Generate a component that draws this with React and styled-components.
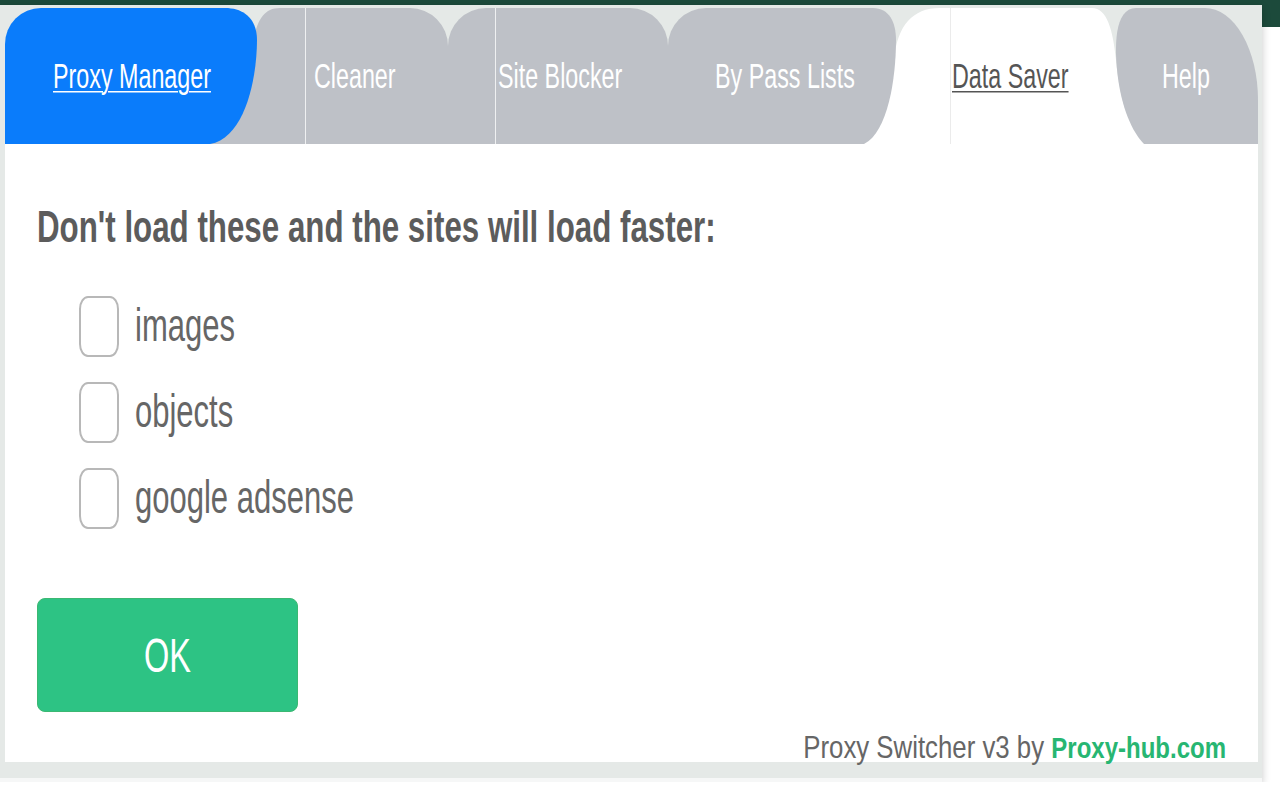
import React from "react";
import styled, { createGlobalStyle } from "styled-components";

const BLUE = "#0a7cfb";
const TAB_GRAY = "#bec1c7";
const FRAME = "#e5e9e7";

const GlobalStyle = createGlobalStyle`
  body {
    margin: 0;
    background: linear-gradient(#1c4a3b, #1c4a3b) top left / 100% 27px no-repeat, #fff;
    font-family: "Liberation Sans", Arial, sans-serif;
  }
`;

const Popup = styled.div`
  width: 1262px;
  box-sizing: border-box;
  margin-top: 5px;
  padding: 3px 4px 16px 5px;
  background: ${FRAME};
  border-bottom: 4px solid #f6f7f7;
  box-shadow: 0 3px 8px rgba(0, 0, 0, 0.22);
`;

const TabBar = styled.div`
  display: flex;
  height: 136px;
`;

const Tab = styled.div`
  position: relative;
  flex: none;
  display: flex;
  width: ${(p) => p.$w}px;
  margin-left: ${(p) => p.$ml || 0}px;
  z-index: ${(p) => p.$z};
  background: ${(p) => p.$bg};
  border-radius: ${(p) => (p.$clip ? "0" : "38px 38px 0 0")};
  clip-path: ${(p) => (p.$clip ? `path('${p.$clip}')` : "none")};
`;

const TabLink = styled.a`
  display: flex;
  align-items: center;
  margin-left: ${(p) => p.$offset}px;
  padding-left: ${(p) => p.$pad || 0}px;
  border-left: ${(p) => (p.$line ? `1px solid ${p.$line}` : "none")};
  white-space: nowrap;
  cursor: pointer;
`;

const TabText = styled.span`
  display: inline-block;
  font-size: 23.3px;
  line-height: 28px;
  color: ${(p) => (p.$active ? "#555" : "#fff")};
  text-decoration: ${(p) => (p.$underline ? "underline" : "none")};
  text-decoration-thickness: 1px;
  text-underline-offset: 2px;
  transform: scaleY(1.5);
`;

const Content = styled.div`
  background: #fff;
  padding: 66px 32px 0;
`;

const Heading = styled.h1`
  margin: 0;
  height: 36px;
  font-size: 31.3px;
  line-height: 36px;
  font-weight: 700;
  color: #5c5c5c;
  transform: scaleY(1.42);
`;

const Options = styled.div`
  margin-top: 37px;
  padding-left: 42px;
`;

const Option = styled.label`
  display: flex;
  align-items: center;
  gap: 16px;
  height: 86px;
  cursor: pointer;
`;

const Box = styled.span`
  flex: none;
  width: 40px;
  height: 61px;
  box-sizing: border-box;
  border: 2px solid #b8b8b8;
  border-radius: 9px / 13px;
  background: #fff;
`;

const OptionText = styled.span`
  display: inline-block;
  font-size: 31px;
  line-height: 36px;
  color: #666;
  transform: scaleY(1.5);
`;

const OkButton = styled.button`
  display: flex;
  align-items: center;
  justify-content: center;
  margin-top: 57px;
  width: 261px;
  height: 114px;
  padding: 0;
  background: #2dc384;
  border: 1px solid #3cb872;
  border-radius: 8px;
  font-family: inherit;
  cursor: pointer;
`;

const OkText = styled.span`
  display: inline-block;
  font-size: 32.5px;
  line-height: 36px;
  color: #fff;
  transform: scaleY(1.5);
`;

const Footer = styled.div`
  display: flex;
  justify-content: flex-end;
  align-items: flex-end;
  height: 50px;
`;

const FooterText = styled.span`
  display: inline-block;
  font-size: 25.8px;
  line-height: 22px;
  color: #666;
  transform: scaleY(1.2);
  transform-origin: bottom;
`;

const FooterLink = styled.a`
  font-size: 24px;
  font-weight: 700;
  color: #27b672;
  text-decoration: none;
`;

const tabs = [
  {
    label: "Proxy Manager",
    w: 257,
    z: 3,
    bg: BLUE,
    clip: "M0,136 L0,36 A36,36 0 0 1 36,0 L220,0 C240,0 252,12 252,32 C252,70 240,130 205,136 Z",
    offset: 48,
    underline: true,
  },
  {
    label: "Cleaner",
    w: 248,
    ml: -62,
    z: 1,
    bg: TAB_GRAY,
    clip: "M0,136 C20,120 45,80 52,40 C56,15 62,0 80,0 L210,0 A38,38 0 0 1 248,38 L248,136 Z",
    offset: 105,
    pad: 8,
    line: "rgba(255,255,255,0.75)",
  },
  { label: "Site Blocker", w: 220, z: 1, bg: TAB_GRAY, offset: 47, pad: 2, line: "rgba(255,255,255,0.75)" },
  {
    label: "By Pass Lists",
    w: 232,
    z: 2,
    bg: TAB_GRAY,
    clip: "M0,136 L0,38 A38,38 0 0 1 38,0 L205,0 C221,0 228,14 228,32 C228,70 220,124 196,136 Z",
    offset: 47,
  },
  {
    label: "Data Saver",
    w: 290,
    ml: -40,
    z: 1,
    bg: "#fff",
    clip: "M0,136 C18,112 30,80 34,50 C38,18 52,0 80,0 L232,0 C247,0 253,22 256,52 C260,95 270,124 290,136 Z",
    offset: 90,
    pad: 1,
    line: "#ebebeb",
    active: true,
    underline: true,
  },
  {
    label: "Help",
    w: 148,
    ml: -40,
    z: 2,
    bg: TAB_GRAY,
    clip: "M34,136 C22,124 12,100 8,70 C4,40 4,0 26,0 L95,0 A53,92 0 0 1 148,92 L148,136 Z",
    offset: 52,
  },
];

const options = ["images", "objects", "google adsense"];

const App = () => {
  return (
    <>
      <GlobalStyle />
      <Popup>
        <TabBar>
          {tabs.map((t) => (
            <Tab key={t.label} $w={t.w} $ml={t.ml} $z={t.z} $bg={t.bg} $clip={t.clip}>
              <TabLink $offset={t.offset} $pad={t.pad} $line={t.line}>
                <TabText $active={t.active} $underline={t.underline}>
                  {t.label}
                </TabText>
              </TabLink>
            </Tab>
          ))}
        </TabBar>

        <Content>
          <Heading>Don't load these and the sites will load faster:</Heading>
          <Options>
            {options.map((o) => (
              <Option key={o}>
                <Box />
                <OptionText>{o}</OptionText>
              </Option>
            ))}
          </Options>
          <OkButton>
            <OkText>OK</OkText>
          </OkButton>
          <Footer>
            <FooterText>
              Proxy Switcher v3 by <FooterLink>Proxy-hub.com</FooterLink>
            </FooterText>
          </Footer>
        </Content>
      </Popup>
    </>
  );
};

export default App;
